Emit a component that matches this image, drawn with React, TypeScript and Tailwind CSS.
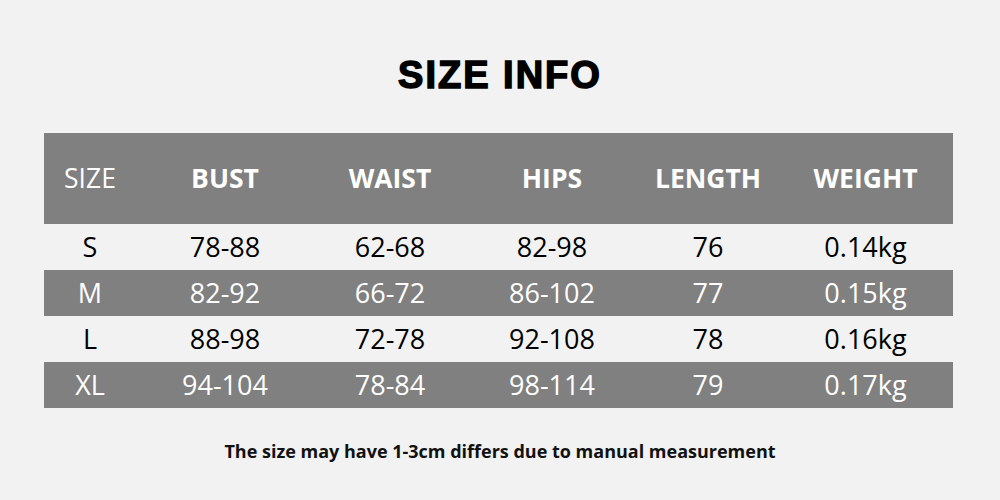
const headers = ["BUST", "WAIST", "HIPS", "LENGTH", "WEIGHT"];

const rows = [
  ["S", "78-88", "62-68", "82-98", "76", "0.14kg"],
  ["M", "82-92", "66-72", "86-102", "77", "0.15kg"],
  ["L", "88-98", "72-78", "92-108", "78", "0.16kg"],
  ["XL", "94-104", "78-84", "98-114", "79", "0.17kg"],
];

const grid = "grid grid-cols-[92px_178px_152px_172px_140px_175px]";

export default function App() {
  return (
    <div className="w-[1000px] h-[500px] bg-[#f2f2f2] flex flex-col items-center font-['Open_Sans',sans-serif]">
      <h1 className="mt-[52px] h-[46px] flex items-center text-[38px] font-bold tracking-[2px] text-black font-['Liberation_Sans',Arial,sans-serif] [-webkit-text-stroke:1.5px_black]">
        SIZE INFO
      </h1>
      <div className="mt-[35px] ml-[44px] self-start w-[909px]">
        <div className={`${grid} h-[91px] bg-[#808080] text-white text-[26.5px] items-center text-center`}>
          <div className="font-normal">SIZE</div>
          {headers.map((h) => (
            <div key={h} className="font-bold">{h}</div>
          ))}
        </div>
        {rows.map((r, i) => (
          <div
            key={r[0]}
            className={`${grid} h-[46px] items-center text-center text-[27px] ${i % 2 === 1 ? "bg-[#808080] text-white" : "text-black"}`}
          >
            {r.map((c, j) => (
              <div key={j}>{c}</div>
            ))}
          </div>
        ))}
      </div>
      <p className="mt-[30px] text-[18px] font-bold text-[#111] font-['Open_Sans',sans-serif]">
        The size may have 1-3cm differs due to manual measurement
      </p>
    </div>
  );
}
